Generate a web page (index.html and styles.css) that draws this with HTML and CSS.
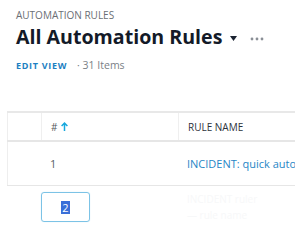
FILE: index.html
```html
<!DOCTYPE html>
<html>
<head>
<meta charset="utf-8">
<link rel="stylesheet" href="styles.css">
</head>
<body>
<div class="head">
  <div class="crumb">AUTOMATION RULES</div>
  <div class="title-row">
    <h1 class="title">All Automation Rules</h1>
    <svg class="caret" width="7" height="5" viewBox="0 0 7 5"><path d="M0 0H7L3.5 5Z" fill="#1b2331"/></svg>
    <svg class="more" width="14" height="4" viewBox="0 0 14 4"><circle cx="2" cy="2" r="1.4" fill="#8a8f96"/><circle cx="7" cy="2" r="1.4" fill="#8a8f96"/><circle cx="12" cy="2" r="1.4" fill="#8a8f96"/></svg>
  </div>
  <div class="sub"><span class="edit">EDIT VIEW</span><span class="count">· 31 Items</span></div>
</div>
<div class="table">
  <div class="row hdr">
    <div class="cell c1"></div>
    <div class="cell c2"><span class="hash">#</span><svg class="arrow" width="7" height="9" viewBox="0 0 7 9"><path d="M3.5 9V1.2M0.6 4L3.5 1.1L6.4 4" stroke="#17a8dd" stroke-width="1.5" fill="none"/></svg></div>
    <div class="cell c3">RULE NAME</div>
  </div>
  <div class="row body">
    <div class="cell c1"></div>
    <div class="cell c2 num">1</div>
    <div class="cell c3 link">INCIDENT: quick auto</div>
  </div>
  <div class="row edit-row">
    <div class="cell c1 plain"></div>
    <div class="cell c2 plain"><div class="input"><span class="sel">2</span></div></div>
    <div class="cell c3 plain ghost"><span>INCIDENT ruler</span><span>— rule name</span></div>
  </div>
</div>
</body>
</html>
```

FILE: styles.css
```css
html, body {
  margin: 0;
  padding: 0;
  background: #ffffff;
  font-family: "Open Sans", "Liberation Sans", sans-serif;
  overflow: hidden;
}
.head {
  padding: 8px 0 0 16px;
}
.crumb {
  font-size: 10px;
  line-height: 14px;
  color: #6b6f75;
}
.title-row {
  display: flex;
  align-items: center;
  margin-top: 1px;
  height: 28px;
}
.title {
  margin: 0;
  font-size: 19.6px;
  line-height: 28px;
  font-weight: 700;
  color: #131a28;
}
.caret {
  margin-left: 8px;
  margin-top: 2px;
}
.more {
  margin-left: 13px;
  margin-top: 4px;
}
.sub {
  margin-top: 7px;
  line-height: 14px;
  display: flex;
  align-items: baseline;
  gap: 10px;
}
.edit {
  color: #1c7fc2;
  font-size: 9px;
  font-weight: 700;
  letter-spacing: 0.7px;
}
.count {
  color: #7a7f86;
  font-size: 10.5px;
}
.table {
  margin-top: 38px;
  margin-left: 7px;
  border-top: 2px solid #e8e8e8;
}
.row {
  display: grid;
  grid-template-columns: 34px 137px 1fr;
}
.cell {
  display: flex;
  align-items: center;
  padding-left: 9px;
}
.c1 {
  border-left: 1px solid #eeeeee;
  padding-left: 0;
}
.hdr {
  height: 27px;
  border-bottom: 2px solid #e6e6e6;
  font-size: 10px;
  color: #2d333b;
}
.hdr .c2 {
  border-left: 1px solid #efefef;
}
.hdr .c3 {
  border-left: 1px solid #efefef;
}
.hash {
  color: #555a60;
  font-size: 10px;
}
.arrow {
  margin-left: 4px;
}
.body {
  height: 43px;
  border-bottom: 1px solid #e6e6e6;
  font-size: 11px;
}
.num {
  color: #5a5f66;
}
.link {
  color: #1f86c6;
  white-space: nowrap;
}
.edit-row {
  height: 41px;
}
.plain {
  border-left: none;
}
.edit-row .c2 {
  padding-left: 0;
  align-items: flex-start;
  padding-top: 6px;
}
.input {
  width: 47px;
  height: 28px;
  border: 1px solid #7cc3e6;
  border-radius: 3px;
  display: flex;
  align-items: center;
  justify-content: center;
  font-size: 11px;
  box-shadow: 0 0 1px #b9e0f2;
}
.sel {
  background: #3a6fd8;
  color: #ffffff;
  line-height: 13px;
  padding: 0 1px;
}
.ghost {
  flex-direction: column;
  align-items: flex-start;
  justify-content: center;
  gap: 2px;
  font-size: 10px;
  color: #f7f8f9;
}
```
